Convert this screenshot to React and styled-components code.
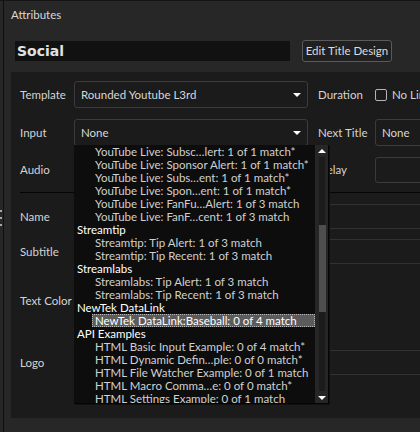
import React from 'react';
import styled, { createGlobalStyle } from 'styled-components';

const GlobalStyle = createGlobalStyle`
  html, body {
    margin: 0;
    padding: 0;
    background: #272727;
  }
  body {
    font-family: Lato, 'Liberation Sans', sans-serif;
    font-size: 11.5px;
    color: #d4d4d4;
  }
`;

const Window = styled.div`
  display: flex;
  width: 420px;
  height: 432px;
  overflow: hidden;
  background: #272727;
  border-top: 1px solid #141414;
  box-sizing: border-box;
`;

const Grip = styled.div`
  display: flex;
  flex-direction: column;
  gap: 5px;
  width: 4px;
  padding-top: 209px;
  border-right: 1px solid #101010;
  box-sizing: border-box;
  flex: none;
`;

const GripDot = styled.span`
  display: block;
  width: 2px;
  height: 2px;
  background: #a8a8a8;
`;

const Main = styled.div`
  position: relative;
  flex: 1;
  min-width: 0;
  padding-left: 7px;
  overflow: hidden;
`;

const Heading = styled.div`
  height: 29px;
  line-height: 28px;
  padding-left: 0;
  color: #d8d8d8;
`;

const TitleRow = styled.div`
  display: flex;
  align-items: center;
  gap: 12px;
  height: 42px;
  padding-left: 4px;
`;

const TitleName = styled.div`
  width: 275px;
  height: 20px;
  line-height: 20px;
  background: #111111;
  padding-left: 2px;
  box-sizing: border-box;
  font-family: 'DejaVu Sans', sans-serif;
  font-weight: bold;
  font-size: 14px;
  color: #e2e2e2;
`;

const Button = styled.div`
  width: 90px;
  height: 22px;
  line-height: 20px;
  text-align: center;
  border: 1px solid #5a5a5a;
  border-radius: 3px;
  background: #202020;
  color: #dcdcdc;
  box-sizing: border-box;
  white-space: nowrap;
`;

const Panel = styled.div`
  position: relative;
  width: 480px;
  height: 346px;
  background: #1b1b1b;
  padding: 9px 0 0 9px;
  box-sizing: border-box;
`;

const Row = styled.div`
  display: flex;
  align-items: center;
  height: 27px;
  margin-bottom: ${(p) => p.$gap || 10}px;
`;

const Label = styled.div`
  width: ${(p) => p.$width || 54}px;
  margin-left: ${(p) => p.$offset || 0}px;
  flex: none;
  color: #d4d4d4;
  white-space: nowrap;
`;

const Select = styled.div`
  display: flex;
  align-items: center;
  justify-content: space-between;
  width: ${(p) => (p.$width ? `${p.$width}px` : 'auto')};
  flex: ${(p) => (p.$width ? 'none' : 1)};
  height: 27px;
  padding: 0 6px;
  border: 1px solid #3b3b3b;
  border-radius: 3px;
  box-sizing: border-box;
  color: #d8d8d8;
`;

const Empty = styled.div`
  flex: 1;
  height: 26px;
  border: 1px solid #3b3b3b;
  border-radius: 3px;
  box-sizing: border-box;
`;

const Arrow = styled.span`
  width: 0;
  height: 0;
  border-left: 4px solid transparent;
  border-right: 4px solid transparent;
  border-${(p) => (p.$up ? 'bottom' : 'top')}: 4px solid #ffffff;
`;

const Check = styled.label`
  display: flex;
  align-items: center;
  gap: 5px;
  white-space: nowrap;
`;

const Box = styled.span`
  width: 10px;
  height: 10px;
  border: 1.5px solid #b4b4b4;
  border-radius: 2px;
`;

const Divider = styled.div`
  height: 1px;
  background: #050505;
  margin: 0 0 11px 0;
`;

const FieldRow = styled.div`
  display: flex;
  align-items: center;
  height: 25px;
  margin-bottom: ${(p) => p.$gap || 0}px;
`;

const Field = styled.div`
  flex: 1;
  height: 25px;
  border-top: 1px solid #323232;
  border-bottom: 1px solid #323232;
  box-sizing: border-box;
`;

const List = styled.div`
  position: absolute;
  left: 63px;
  top: 73px;
  width: 255px;
  height: 259px;
  display: flex;
  background: #0d0d0d;
  border-right: 1px solid #050505;
  border-bottom: 1px solid #050505;
  box-shadow: 1px 1px 0 #111;
  box-sizing: border-box;
`;

const Items = styled.div`
  flex: 1;
  overflow: hidden;
`;

const Item = styled.div`
  height: 13px;
  line-height: 13px;
  margin-left: ${(p) => (p.$header ? 3 : 18)}px;
  padding-left: ${(p) => (p.$header ? 0 : 3)}px;
  color: ${(p) => (p.$header || p.$selected ? '#ffffff' : '#d0d0d0')};
  background: ${(p) => (p.$selected ? '#5c5c5c' : 'transparent')};
  outline: ${(p) => (p.$selected ? '1px dotted #b8b8b8' : 'none')};
  outline-offset: -1px;
  white-space: nowrap;
`;

const Scroll = styled.div`
  display: flex;
  flex-direction: column;
  align-items: center;
  width: 13px;
  background: #262626;
  flex: none;
  padding: 4px 0 3px;
  box-sizing: border-box;
`;

const Track = styled.div`
  flex: 1;
  width: 6px;
  margin: 4px 0 5px;
  background: #1b1b1b;
  display: flex;
  flex-direction: column;
`;

const Thumb = styled.div`
  margin-top: 68px;
  height: 87px;
  width: 7px;
  background: #4e4e4e;
`;

const rows = [
  { text: 'YouTube Live: Subsc…lert: 1 of 1 match*' },
  { text: 'YouTube Live: Sponsor Alert: 1 of 1 match*' },
  { text: 'YouTube Live: Subs…ent: 1 of 1 match*' },
  { text: 'YouTube Live: Spon…ent: 1 of 1 match*' },
  { text: 'YouTube Live: FanFu…Alert: 1 of 3 match' },
  { text: 'YouTube Live: FanF…cent: 1 of 3 match' },
  { text: 'Streamtip', header: true },
  { text: 'Streamtip: Tip Alert: 1 of 3 match' },
  { text: 'Streamtip: Tip Recent: 1 of 3 match' },
  { text: 'Streamlabs', header: true },
  { text: 'Streamlabs: Tip Alert: 1 of 3 match' },
  { text: 'Streamlabs: Tip Recent: 1 of 3 match' },
  { text: 'NewTek DataLink', header: true },
  { text: 'NewTek DataLink:Baseball: 0 of 4 match', selected: true },
  { text: 'API Examples', header: true },
  { text: 'HTML Basic Input Example: 0 of 4 match*' },
  { text: 'HTML Dynamic Defin…ple: 0 of 0 match*' },
  { text: 'HTML File Watcher Example: 0 of 1 match' },
  { text: 'HTML Macro Comma…e: 0 of 0 match*' },
  { text: 'HTML Settings Example: 0 of 1 match' },
];

const App = () => (
  <>
    <GlobalStyle />
    <Window>
      <Grip>
        <GripDot />
        <GripDot />
        <GripDot />
      </Grip>
      <Main>
        <Heading>Attributes</Heading>
        <TitleRow>
          <TitleName>Social</TitleName>
          <Button>Edit Title Design</Button>
        </TitleRow>
        <Panel>
          <Row $gap={11}>
            <Label>Template</Label>
            <Select $width={234}>
              Rounded Youtube L3rd
              <Arrow />
            </Select>
            <Label $width={57} $offset={10}>Duration</Label>
            <Check>
              <Box />
              No Limit
            </Check>
          </Row>
          <Row $gap={10}>
            <Label>Input</Label>
            <Select $width={234}>
              None
              <Arrow />
            </Select>
            <Label $width={57} $offset={10}>Next Title</Label>
            <Select>None</Select>
          </Row>
          <Row $gap={9}>
            <Label>Audio</Label>
            <Label $width={234}>&nbsp;</Label>
            <Label $width={57} $offset={10}>Delay</Label>
            <Empty />
          </Row>
          <Divider />
          <FieldRow $gap={10}>
            <Label>Name</Label>
            <Field />
          </FieldRow>
          <FieldRow $gap={24}>
            <Label>Subtitle</Label>
            <Field />
          </FieldRow>
          <FieldRow $gap={37}>
            <Label>Text Color</Label>
          </FieldRow>
          <FieldRow>
            <Label>Logo</Label>
            <Field />
          </FieldRow>
          <List>
            <Items>
              {rows.map((r) => (
                <Item key={r.text} $header={r.header} $selected={r.selected}>
                  {r.text}
                </Item>
              ))}
            </Items>
            <Scroll>
              <Arrow $up />
              <Track>
                <Thumb />
              </Track>
              <Arrow />
            </Scroll>
          </List>
        </Panel>
      </Main>
    </Window>
  </>
);

export default App;
